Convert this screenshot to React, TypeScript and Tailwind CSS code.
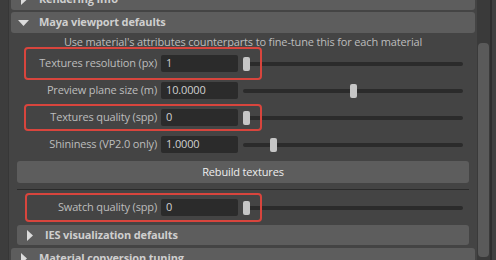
import type { ReactNode } from 'react'

type Row = {
  label: string
  value: string
  thumb: number
}

const rows: Row[] = [
  { label: 'Textures resolution (px)', value: '1', thumb: 0 },
  { label: 'Preview plane size (m)', value: '10.0000', thumb: 107 },
  { label: 'Textures quality (spp)', value: '0', thumb: 0 },
  { label: 'Shininess (VP2.0 only)', value: '1.0000', thumb: 27 },
]

function Arrow({ open }: { open?: boolean }) {
  if (open) {
    return (
      <svg width="11" height="6" viewBox="0 0 11 6" className="ml-[7px]">
        <polygon points="0,0 11,0 5.5,6" fill="#dcdcdc" />
      </svg>
    )
  }
  return (
    <svg width="6" height="11" viewBox="0 0 6 11" className="ml-[10px]">
      <polygon points="0,0 6,5.5 0,11" fill="#dcdcdc" />
    </svg>
  )
}

function Header({ title, open, nested }: { title: string; open?: boolean; nested?: boolean }) {
  return (
    <div
      className={
        nested
          ? 'mx-[6px] flex h-[20px] shrink-0 items-center rounded-[3px] bg-[#5d5d5d]'
          : 'flex h-[21px] shrink-0 items-center rounded-[3px] bg-[#5d5d5d]'
      }
    >
      <div className="flex w-[28px] shrink-0 items-center">
        <Arrow open={open} />
      </div>
      <span className="font-bold text-[#cfcfcf]">{title}</span>
    </div>
  )
}

function Slider({ thumb }: { thumb: number }) {
  return (
    <div className="relative h-[14px] w-[220px]">
      <div className="absolute inset-x-0 top-[5px] h-[4px] rounded-full bg-[#2b2b2b]" />
      <div
        className="absolute top-0 h-[14px] w-[7px] rounded-[2px] bg-[#c6c6c6]"
        style={{ left: thumb }}
      />
    </div>
  )
}

function Field({ label, value, thumb }: Row) {
  return (
    <div className="flex h-[27px] shrink-0 items-center">
      <span className="w-[146px] shrink-0 text-right">{label}</span>
      <div className="ml-[4px] flex h-[17px] w-[77px] shrink-0 items-center rounded-[2px] bg-[#2b2b2b] pl-[5px] text-[#d0d0d0]">
        {value}
      </div>
      <div className="ml-[5px]">
        <Slider thumb={thumb} />
      </div>
    </div>
  )
}

function Mark({ className }: { className: string }): ReactNode {
  return <div className={`absolute rounded-[4px] border-2 border-[#d8453d] ${className}`} />
}

export default function App() {
  return (
    <div className="relative flex h-[260px] w-[496px] overflow-hidden bg-[#444444] font-['Open_Sans',sans-serif] text-[11px] tracking-[-0.15px] text-[#bdbdbd]">
      <div className="w-[9px] shrink-0 border-r border-[#373737] bg-[#3d3d3d]" />

      <div className="mt-[-11px] flex w-[467px] shrink-0 flex-col pl-[2px] pr-[1px]">
        <Header title="Rendering Info" />
        <div className="h-[2px] shrink-0" />
        <Header title="Maya viewport defaults" open />
        <p className="h-[17px] shrink-0 text-center leading-[17px]">
          Use material's attributes counterparts to fine-tune this for each material
        </p>
        {rows.map((row) => (
          <Field key={row.label} {...row} />
        ))}
        <button className="mx-[6px] mt-[3px] h-[22px] shrink-0 rounded-[3px] bg-[#5d5d5d] text-[#eeeeee]">
          Rebuild textures
        </button>
        <div className="mx-[6px] mt-[6px] h-px shrink-0 bg-[#2b2b2b]" />
        <div className="mt-[4px]">
          <Field label="Swatch quality (spp)" value="0" thumb={0} />
        </div>
        <div className="h-[4px] shrink-0" />
        <Header title="IES visualization defaults" nested />
        <div className="h-[3px] shrink-0" />
        <Header title="Material conversion tuning" />
      </div>

      <div className="flex w-[20px] shrink-0">
        <div className="w-px bg-[#444444]" />
        <div className="w-[13px] bg-[#3a3a3a] px-px pt-[43px]">
          <div className="h-[214px] rounded-[4px] bg-[#5a5a5a]" />
        </div>
        <div className="w-[2px] bg-[#2e2e2e]" />
        <div className="flex-1 bg-[#404040]" />
      </div>

      <Mark className="left-[24px] top-[47px] h-[33px] w-[238px]" />
      <Mark className="left-[24px] top-[104px] h-[27px] w-[238px]" />
      <Mark className="left-[25px] top-[193px] h-[29px] w-[237px]" />
    </div>
  )
}
